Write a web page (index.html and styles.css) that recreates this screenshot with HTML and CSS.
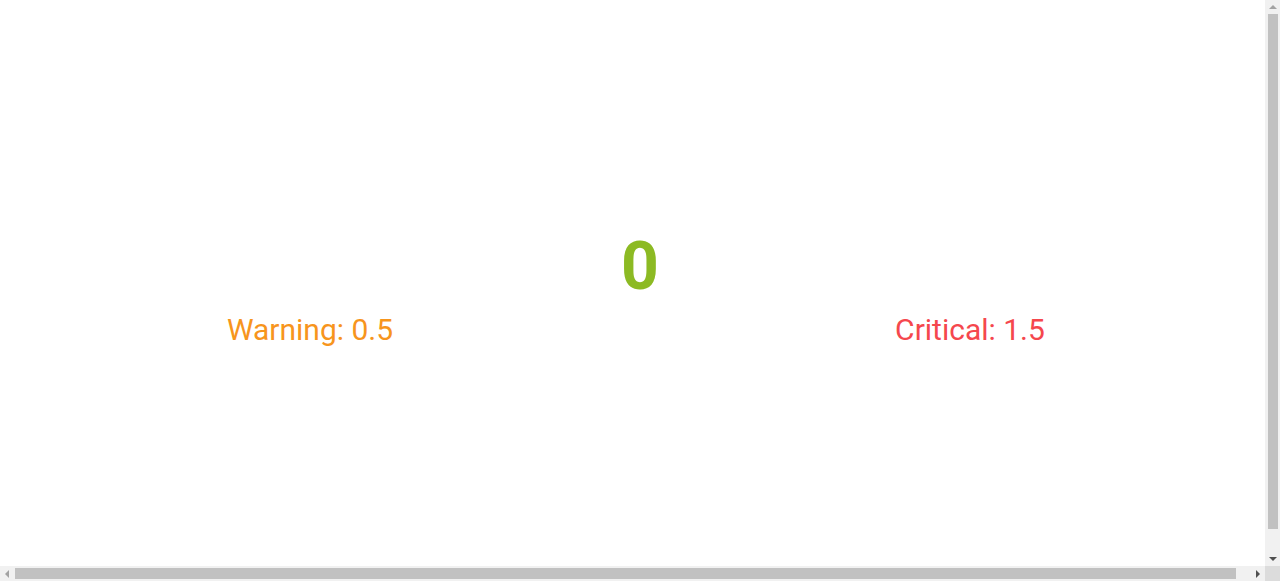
FILE: index.html
```html
<!DOCTYPE html>
<html>
<head>
<meta charset="utf-8">
<link rel="stylesheet" href="styles.css">
</head>
<body>
<div class="screen">
  <div class="gauge">
    <div class="value">0</div>
    <div class="thresholds">
      <div class="warning">Warning: 0.5</div>
      <div class="critical">Critical: 1.5</div>
    </div>
  </div>
</div>
<div class="vscroll">
  <div class="arrow arrow-up"></div>
  <div class="vthumb"></div>
  <div class="spacer"></div>
  <div class="arrow arrow-down"></div>
</div>
<div class="hscroll">
  <div class="arrow arrow-left"></div>
  <div class="hthumb"></div>
  <div class="spacer"></div>
  <div class="arrow arrow-right"></div>
</div>
<div class="corner"></div>
</body>
</html>
```

FILE: styles.css
```css
html, body {
  margin: 0;
  padding: 0;
  background: #fff;
  font-family: Roboto, "Liberation Sans", sans-serif;
  overflow: hidden;
}
.screen {
  box-sizing: border-box;
  width: 1280px;
  height: 581px;
  padding-top: 2px;
  display: flex;
  align-items: center;
  justify-content: center;
}
.gauge {
  width: 100%;
  display: flex;
  flex-direction: column;
  align-items: center;
}
.value {
  font-size: 66px;
  font-weight: 700;
  line-height: 66px;
  color: #8cba23;
}
.thresholds {
  width: 100%;
  margin-top: 10px;
  display: grid;
  grid-template-columns: 1fr 1fr;
  column-gap: 40px;
  font-size: 30px;
  line-height: 40px;
  text-align: center;
}
.warning { color: #f7951d; }
.critical { color: #f5474d; }

/* scrollbars */
.vscroll {
  position: fixed;
  top: 0;
  right: 0;
  width: 15px;
  height: 566px;
  background: #f1f1f1;
  display: flex;
  flex-direction: column;
  align-items: center;
}
.vthumb {
  width: 10px;
  height: 515px;
  flex: none;
  margin-top: 1px;
  background: #c1c1c1;
}
.spacer {
  flex: 1;
}
.hscroll {
  position: fixed;
  left: 0;
  bottom: 0;
  width: 1265px;
  height: 15px;
  background: #f1f1f1;
  display: flex;
  align-items: center;
}
.hthumb {
  width: 1221px;
  height: 11px;
  flex: none;
  margin-left: 2px;
  background: #c1c1c1;
}
.corner {
  position: fixed;
  right: 0;
  bottom: 0;
  width: 15px;
  height: 15px;
  background: #dcdcdc;
}
.arrow {
  width: 0;
  height: 0;
  flex: none;
}
.arrow-up {
  margin: 5px 0 4px;
  border-left: 4px solid transparent;
  border-right: 4px solid transparent;
  border-bottom: 4px solid #a3a3a3;
}
.arrow-down {
  margin: 5px 0 5px;
  border-left: 4px solid transparent;
  border-right: 4px solid transparent;
  border-top: 4px solid #505050;
}
.arrow-left {
  margin: 0 4px 0 5px;
  border-top: 4px solid transparent;
  border-bottom: 4px solid transparent;
  border-right: 4px solid #a3a3a3;
}
.arrow-right {
  margin: 0 5px 0 5px;
  border-top: 4px solid transparent;
  border-bottom: 4px solid transparent;
  border-left: 4px solid #505050;
}
```
